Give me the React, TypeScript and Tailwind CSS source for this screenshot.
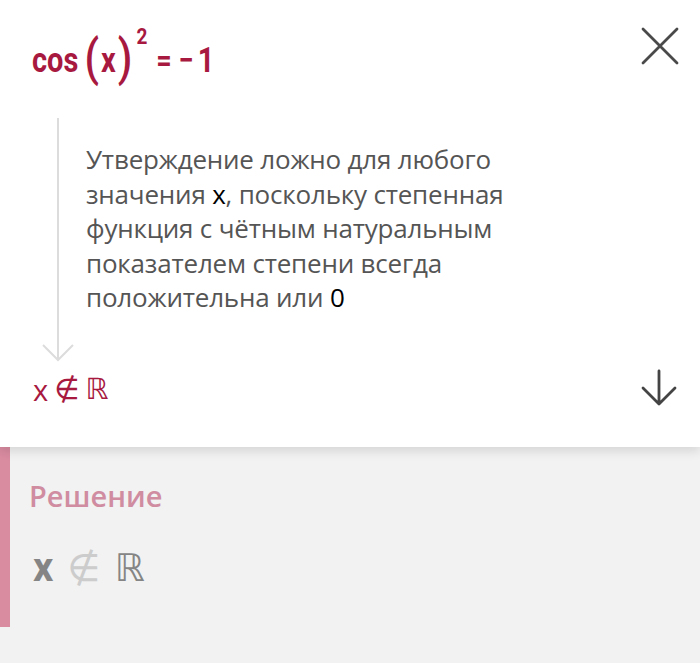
const SANS = "font-['Open_Sans','Noto_Sans',sans-serif]";
const MATH = "font-['Roboto','Liberation_Sans',sans-serif]";
const SYM = "font-['DejaVu_Sans','Noto_Sans',sans-serif]";

function CloseIcon() {
  return (
    <svg width="38" height="38" viewBox="0 0 38 38" className="text-[#4a4a4a]">
      <path d="M2 2 L36 36 M36 2 L2 36" stroke="currentColor" strokeWidth="2.8" strokeLinecap="round" />
    </svg>
  );
}

function DownIcon() {
  return (
    <svg width="36" height="38" viewBox="0 0 36 38" className="text-[#444]">
      <path d="M18 2 V35 M2 19 L18 35 L34 19" stroke="currentColor" strokeWidth="2.8" strokeLinecap="round" strokeLinejoin="round" fill="none" />
    </svg>
  );
}

export default function App() {
  return (
    <div className="w-[700px] h-[663px] bg-[#f2f2f2] overflow-hidden">
      {/* step card */}
      <div className="relative z-10 bg-white h-[447px] shadow-[0_4px_10px_rgba(0,0,0,0.12)]">
        <div className="flex items-start justify-between pl-[32px] pr-[21px] pt-[27px]">
          <div
            className={`${MATH} font-bold text-[#a8193f] flex items-center h-[56px] leading-none scale-y-[1.18] origin-top`}
          >
            <span className="text-[29px]">cos</span>
            <span className="text-[42px] font-medium ml-[6px] -mt-[2px]">(</span>
            <span className="text-[29px] mx-[2px]">x</span>
            <span className="text-[42px] font-medium -mt-[2px]">)</span>
            <span className="text-[19px] self-start -mt-[2px] ml-[4px]">2</span>
            <span className="text-[27px] ml-[9px]">=</span>
            <span className="text-[27px] ml-[7px]">−</span>
            <span className="text-[29px] ml-[4px]">1</span>
          </div>
          <CloseIcon />
        </div>

        <div className="flex mt-[35px]">
          {/* arrow rail */}
          <div className="w-[86px] shrink-0 pl-[42px]">
            <svg width="34" height="244" viewBox="0 0 34 244">
              <path d="M16 0 V241" stroke="#dcdcdc" strokeWidth="2" />
              <path d="M1 227 L16 242 L31 227" stroke="#dcdcdc" strokeWidth="2" fill="none" />
            </svg>
          </div>
          <p className={`${SANS} text-[26px] leading-[34.5px] text-[#555] pt-[24px] tracking-[-0.2px]`}>
            Утверждение ложно для любого
            <br />
            значения <span className="text-black">x</span>, поскольку степенная
            <br />
            функция с чётным натуральным
            <br />
            показателем степени всегда
            <br />
            положительна или <span className="text-black">0</span>
          </p>
        </div>

        <div className="flex items-center justify-between pl-[33px] pr-[23px] mt-[6px]">
          <div className="flex items-center gap-[6px] text-[#a8193f] text-[29px]">
            <span className={SANS}>x</span>
            <span className={SYM}>∉</span>
            <span className={SYM}>ℝ</span>
          </div>
          <div className="-mt-[4px]">
            <DownIcon />
          </div>
        </div>
      </div>

      {/* solution */}
      <div className="flex">
        <div className="w-[10px] h-[180px] bg-[#d98ba0]" />
        <div className="pl-[19px] pt-[34px]">
          <div className={`${SANS} font-semibold text-[29px] text-[#d08ca0] leading-none`}>Решение</div>
          <div className="flex items-center gap-[14px] mt-[38px] text-[38px] leading-none pl-[4px]">
            <span className={`${MATH} font-bold text-[#858585] text-[40px]`}>x</span>
            <span className={`${SYM} text-[#cccccc]`}>∉</span>
            <span className={`${SYM} text-[#858585]`}>ℝ</span>
          </div>
        </div>
      </div>
    </div>
  );
}
